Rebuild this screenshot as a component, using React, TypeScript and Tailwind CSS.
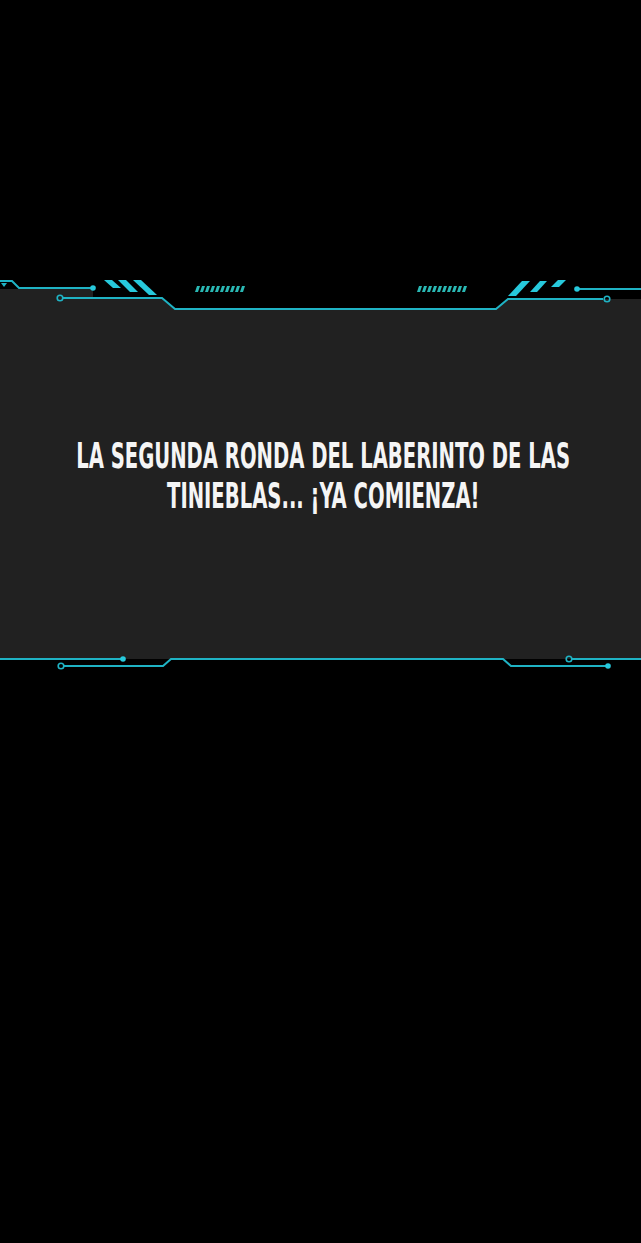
const CYAN = '#1fb3c4'
const STRIPE = '#27c9dc'
const PANEL = '#212121'

const hatch = (x0: number) =>
  Array.from({ length: 10 }, (_, i) => {
    const x = x0 + i * 5
    return `${x + 2},10 ${x + 5},10 ${x + 3},16 ${x},16`
  })

function TopFrame() {
  return (
    <svg width="641" height="36" viewBox="0 0 641 36" className="block">
      {/* panel fill behind the frame */}
      <polygon points="0,13 93,13 93,22 162,22 175,33 496,33 508,23 641,23 641,36 0,36" fill={PANEL} />

      {/* left circuit */}
      <polyline points="0,5 12,5 19,12 93,12" fill="none" stroke={CYAN} strokeWidth="2" />
      <circle cx="93" cy="12" r="2.8" fill={STRIPE} />
      <polygon points="1,7 7,7 4,11" fill={CYAN} />
      <circle cx="60" cy="22" r="2.8" fill="none" stroke={CYAN} strokeWidth="1.6" />
      <polyline points="63,22 162,22 175,33 496,33 508,23 603,23" fill="none" stroke={CYAN} strokeWidth="2" />
      <circle cx="607" cy="23" r="2.8" fill="none" stroke={CYAN} strokeWidth="1.6" />

      {/* right circuit */}
      <line x1="577" y1="13" x2="641" y2="13" stroke={CYAN} strokeWidth="2" />
      <circle cx="577" cy="13" r="2.8" fill={STRIPE} />

      {/* stripes */}
      <polygon points="104,4 112,4 121,12 113,12" fill={STRIPE} />
      <polygon points="118,4 126,4 138,16 130,16" fill={STRIPE} />
      <polygon points="133,4 141,4 157,19 149,19" fill={STRIPE} />

      <polygon points="522,5 530,5 516,20 508,20" fill={STRIPE} />
      <polygon points="540,5 547,5 537,16 530,16" fill={STRIPE} />
      <polygon points="558,4 566,4 559,11 551,11" fill={STRIPE} />

      {/* hatches */}
      {hatch(195).map((p, i) => (
        <polygon key={`l${i}`} points={p} fill="#2ab8b4" />
      ))}
      {hatch(417).map((p, i) => (
        <polygon key={`r${i}`} points={p} fill="#2ab8b4" />
      ))}
    </svg>
  )
}

function BottomFrame() {
  return (
    <svg width="641" height="15" viewBox="0 0 641 15" className="block">
      <rect x="0" y="0" width="641" height="4" fill={PANEL} />
      <line x1="0" y1="4" x2="123" y2="4" stroke={CYAN} strokeWidth="2" />
      <circle cx="123" cy="4" r="2.8" fill={STRIPE} />
      <circle cx="61" cy="11" r="2.8" fill="none" stroke={CYAN} strokeWidth="1.6" />
      <polyline points="64,11 163,11 171,4 503,4 511,11 608,11" fill="none" stroke={CYAN} strokeWidth="2" />
      <circle cx="608" cy="11" r="2.8" fill={STRIPE} />
      <circle cx="569" cy="4" r="2.8" fill="none" stroke={CYAN} strokeWidth="1.6" />
      <line x1="572" y1="4" x2="641" y2="4" stroke={CYAN} strokeWidth="2" />
    </svg>
  )
}

const lines = ['LA SEGUNDA RONDA DEL LABERINTO DE LAS', 'TINIEBLAS... ¡YA COMIENZA!']

export default function App() {
  return (
    <div className="min-h-[1243px] bg-black pt-[276px]">
      {/* Panel */}
      <TopFrame />
      <div className="h-[343px] bg-[#212121] pt-[124px]">
        <div
          className="flex flex-col items-center text-[36px] leading-[40px] font-bold text-[#f5f5f5] whitespace-nowrap"
          style={{ fontFamily: '"DejaVu Sans Condensed", "Roboto", sans-serif', fontStretch: 'condensed' }}
        >
          {lines.map((line) => (
            <span key={line} className="inline-block scale-x-[0.605] translate-x-[3px]">
              {line}
            </span>
          ))}
        </div>
      </div>
      <BottomFrame />
    </div>
  )
}
